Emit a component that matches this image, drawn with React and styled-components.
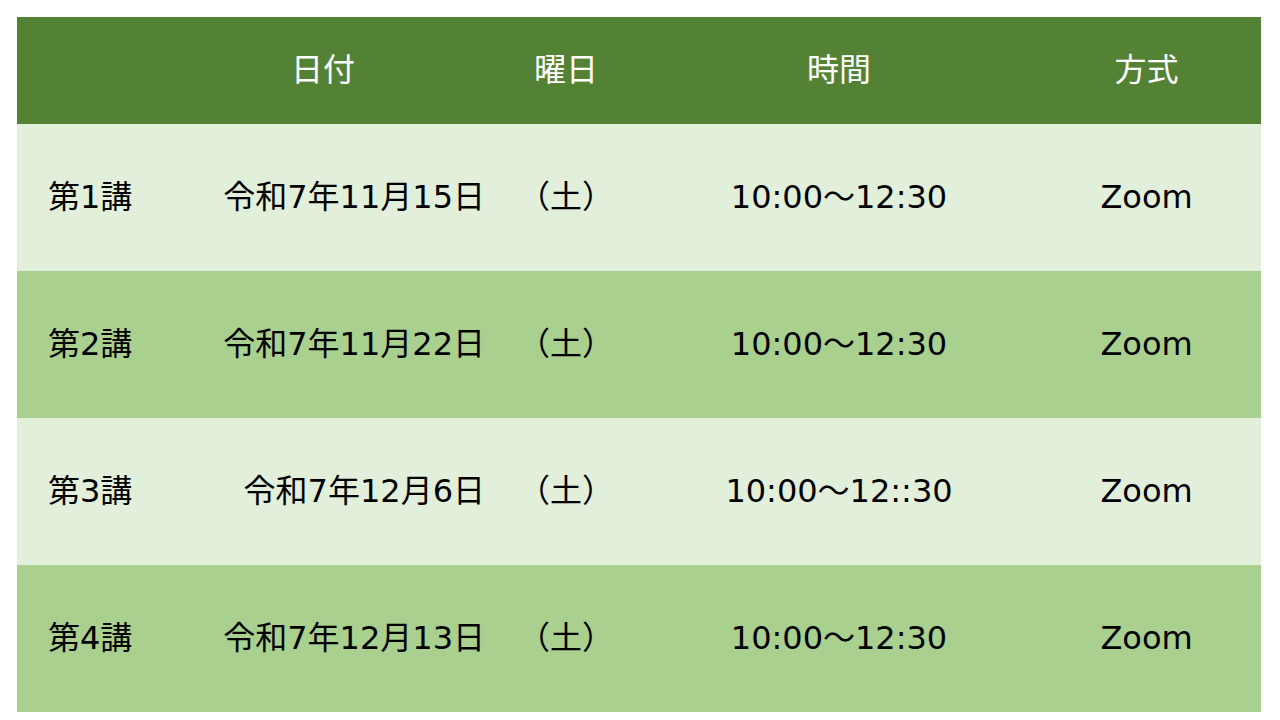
import React from "react";
import styled, { createGlobalStyle } from "styled-components";

const GlobalStyle = createGlobalStyle`
  html, body {
    margin: 0;
    padding: 0;
    background: #ffffff;
  }
  body {
    font-family: "DejaVu Sans", "Noto Sans CJK JP", sans-serif;
  }
`;

const Page = styled.div`
  width: 1280px;
  height: 720px;
  padding: 17px 19px 0 17px;
  box-sizing: border-box;
`;

const Table = styled.div`
  display: grid;
  grid-template-columns: 129px 354px 132px 414px 215px;
  grid-template-rows: 107px repeat(4, 147px);
`;

const Row = styled.div`
  display: contents;
`;

const Cell = styled.div`
  display: flex;
  align-items: center;
  justify-content: ${(p) => p.align || "center"};
  padding: ${(p) => p.pad || "0"};
  padding-bottom: 2px;
  background: ${(p) => p.bg};
  color: ${(p) => (p.head ? "#ffffff" : "#000000")};
  font-size: 32px;
  line-height: 40px;
  white-space: nowrap;
  box-sizing: border-box;
`;

const HEAD = "#548235";
const LIGHT = "#e2efda";
const DARK = "#a9d08e";

const rows = [
  ["第1講", "令和7年11月15日", "（土）", "10:00～12:30", "Zoom"],
  ["第2講", "令和7年11月22日", "（土）", "10:00～12:30", "Zoom"],
  ["第3講", "令和7年12月6日", "（土）", "10:00～12::30", "Zoom"],
  ["第4講", "令和7年12月13日", "（土）", "10:00～12:30", "Zoom"],
];

const App = () => (
  <Page>
    <GlobalStyle />
    <Table>
      <Row>
        <Cell head bg={HEAD} />
        <Cell head bg={HEAD}>日付</Cell>
        <Cell head bg={HEAD}>曜日</Cell>
        <Cell head bg={HEAD}>時間</Cell>
        <Cell head bg={HEAD} pad="0 14px 0 0">方式</Cell>
      </Row>
      {rows.map((r, i) => {
        const bg = i % 2 === 0 ? LIGHT : DARK;
        return (
          <Row key={r[0]}>
            <Cell bg={bg} align="flex-start" pad="0 0 0 31px">{r[0]}</Cell>
            <Cell bg={bg} align="flex-end" pad="0 15px 0 0">{r[1]}</Cell>
            <Cell bg={bg}>{r[2]}</Cell>
            <Cell bg={bg}>{r[3]}</Cell>
            <Cell bg={bg} pad="0 14px 0 0">{r[4]}</Cell>
          </Row>
        );
      })}
    </Table>
  </Page>
);

export default App;
